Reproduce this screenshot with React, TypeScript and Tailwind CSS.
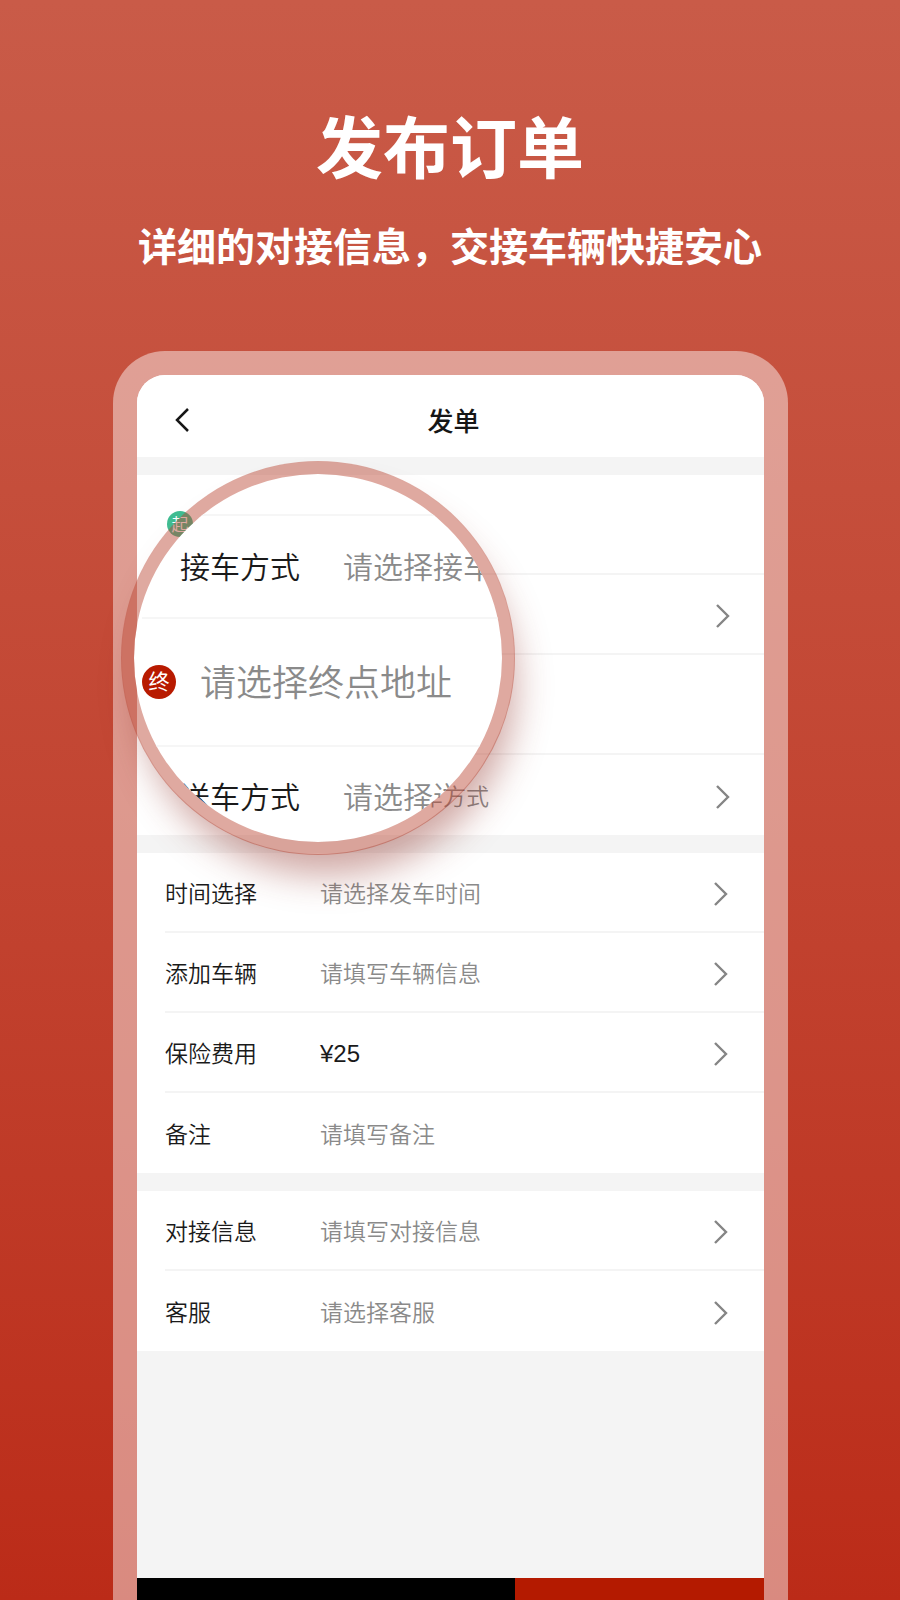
import { clsx } from 'clsx';

interface RowProps {
    label: string;
    value?: string;
    labelHidden?: boolean;
    amount?: boolean;
    last?: boolean;
}

function Chevron() {
    return (
        <svg width="14" height="24" viewBox="0 0 14 24" fill="none" className="shrink-0">
            <path d="M1 1 L12 12 L1 23" stroke="#858585" strokeWidth="2.4" />
        </svg>
    );
}

function Row({ label, value, labelHidden, amount, last }: RowProps) {
    return (
        <div className="bg-white pl-7">
            <button
                type="button"
                aria-label={label}
                className={clsx(
                    'flex h-20 w-full items-center pt-1 text-left text-[23px] leading-8',
                    labelHidden ? 'pr-[34px]' : 'pr-9',
                    !last && 'border-b-2 border-[#f4f4f4]'
                )}
            >
                <span className={clsx('shrink-0 pb-1 text-[#1a1a1a]', labelHidden ? 'w-[163px]' : 'w-[155px]')}>{!labelHidden && label}</span>
                <span className={clsx('flex-1', amount ? "font-['Liberation_Sans',sans-serif] text-[24px] text-[#1a1a1a]" : 'pb-1 text-[#8a8a8a]')}>{value}</span>
                <Chevron />
            </button>
        </div>
    );
}

function Lens() {
    return (
        <div className="absolute -left-4 top-[86px] h-[394px] w-[394px] overflow-hidden rounded-full border-[13px] border-[#b8402c]/45 bg-white bg-clip-padding text-[30px] leading-10 shadow-[8px_28px_36px_-8px_rgba(140,45,35,0.42)]">
            <div className="ml-2">
                <div className="h-[42px] border-b-2 border-[#f6f6f6]" />
                <div className="flex h-[103px] items-center border-b-2 border-[#f6f6f6] pb-1 pl-[38px]">
                    <span className="w-[163px] shrink-0 text-[#1a1a1a]">接车方式</span>
                    <span className="shrink-0 whitespace-nowrap text-[#8a8a8a]">请选择接车</span>
                </div>
                <div className="flex h-32 items-center gap-6 border-b-2 border-[#f6f6f6]">
                    <span className="flex h-[34px] w-[34px] shrink-0 items-center justify-center rounded-full bg-[#b81a00] text-[21px] font-normal leading-8 text-white">
                        <span className="pb-1">终</span>
                    </span>
                    <span className="shrink-0 whitespace-nowrap pb-1 text-[36px] text-[#8a8a8a]">请选择终点地址</span>
                </div>
                <div className="flex h-24 items-center pl-[38px]">
                    <span className="w-[163px] shrink-0 text-[#1a1a1a]">送车方式</span>
                    <span className="shrink-0 whitespace-nowrap text-[#8a8a8a]">请选择送</span>
                </div>
            </div>
        </div>
    );
}

export default function App() {
    return (
        <main className="flex min-h-screen flex-col bg-linear-to-b from-[#c95b48] to-[#bb2b18] font-['Noto_Sans_CJK_SC',sans-serif] font-[350]">
            <header className="px-8 pt-24 text-center font-bold text-white">
                <h1 className="text-[67px] leading-[96px]">发布订单</h1>
                <p className="mt-6 text-[39px] leading-[56px]">详细的对接信息，交接车辆快捷安心</p>
            </header>

            {/* Phone */}
            <div className="mt-[79px] ml-[113px] mr-28 flex flex-1 flex-col rounded-t-[52px] bg-white/45 px-6 pt-6">
                <div className="relative flex flex-1 flex-col rounded-t-[28px] bg-[#f4f4f4]">
                    <div className="grid h-[82px] grid-cols-[1fr_auto_1fr] items-center rounded-t-[28px] bg-white pt-2 pl-[38px] pr-8">
                        <button type="button" aria-label="返回" className="w-8">
                            <svg width="16" height="24" viewBox="0 0 16 24" fill="none">
                                <path d="M13 1 L2 12 L13 23" stroke="#161616" strokeWidth="2.5" />
                            </svg>
                        </button>
                        <h2 className="text-[26px] font-medium leading-10 text-[#161616]">发单</h2>
                    </div>

                    <div className="mt-[18px]">
                        <div className="bg-white pl-[30px]">
                            <button type="button" aria-label="起点地址" className="flex h-[100px] w-full items-center border-b-2 border-[#f4f4f4]">
                                <span className="flex h-[26px] w-[26px] items-center justify-center rounded-full bg-[#40bd92] text-[17px] leading-6 text-white">起</span>
                            </button>
                        </div>
                        <Row label="接车方式" labelHidden />
                        <div className="bg-white pl-[30px]">
                            <button type="button" aria-label="终点地址" className="block h-[100px] w-full border-b-2 border-[#f4f4f4]" />
                        </div>
                        <Row label="送车方式" value="请选择送车方式" labelHidden last />
                    </div>

                    <div className="mt-[18px]">
                        <Row label="时间选择" value="请选择发车时间" />
                        <Row label="添加车辆" value="请填写车辆信息" />
                        <Row label="保险费用" value="¥25" amount />
                        <div className="flex h-20 items-center bg-white pl-7 pr-9 text-[23px] leading-8">
                            <label htmlFor="remark" className="w-[155px] shrink-0 text-[#1a1a1a]">备注</label>
                            <input id="remark" placeholder="请填写备注" className="min-w-0 flex-1 outline-none placeholder:text-[#8a8a8a]" />
                        </div>
                    </div>

                    <div className="mt-[18px]">
                        <Row label="对接信息" value="请填写对接信息" />
                        <Row label="客服" value="请选择客服" last />
                    </div>

                    <div className="mt-auto grid h-[22px] grid-cols-[378fr_249fr]">
                        <div className="bg-black" />
                        <div className="bg-[#b41a00]" />
                    </div>

                    <Lens />
                </div>
            </div>
        </main>
    );
}
